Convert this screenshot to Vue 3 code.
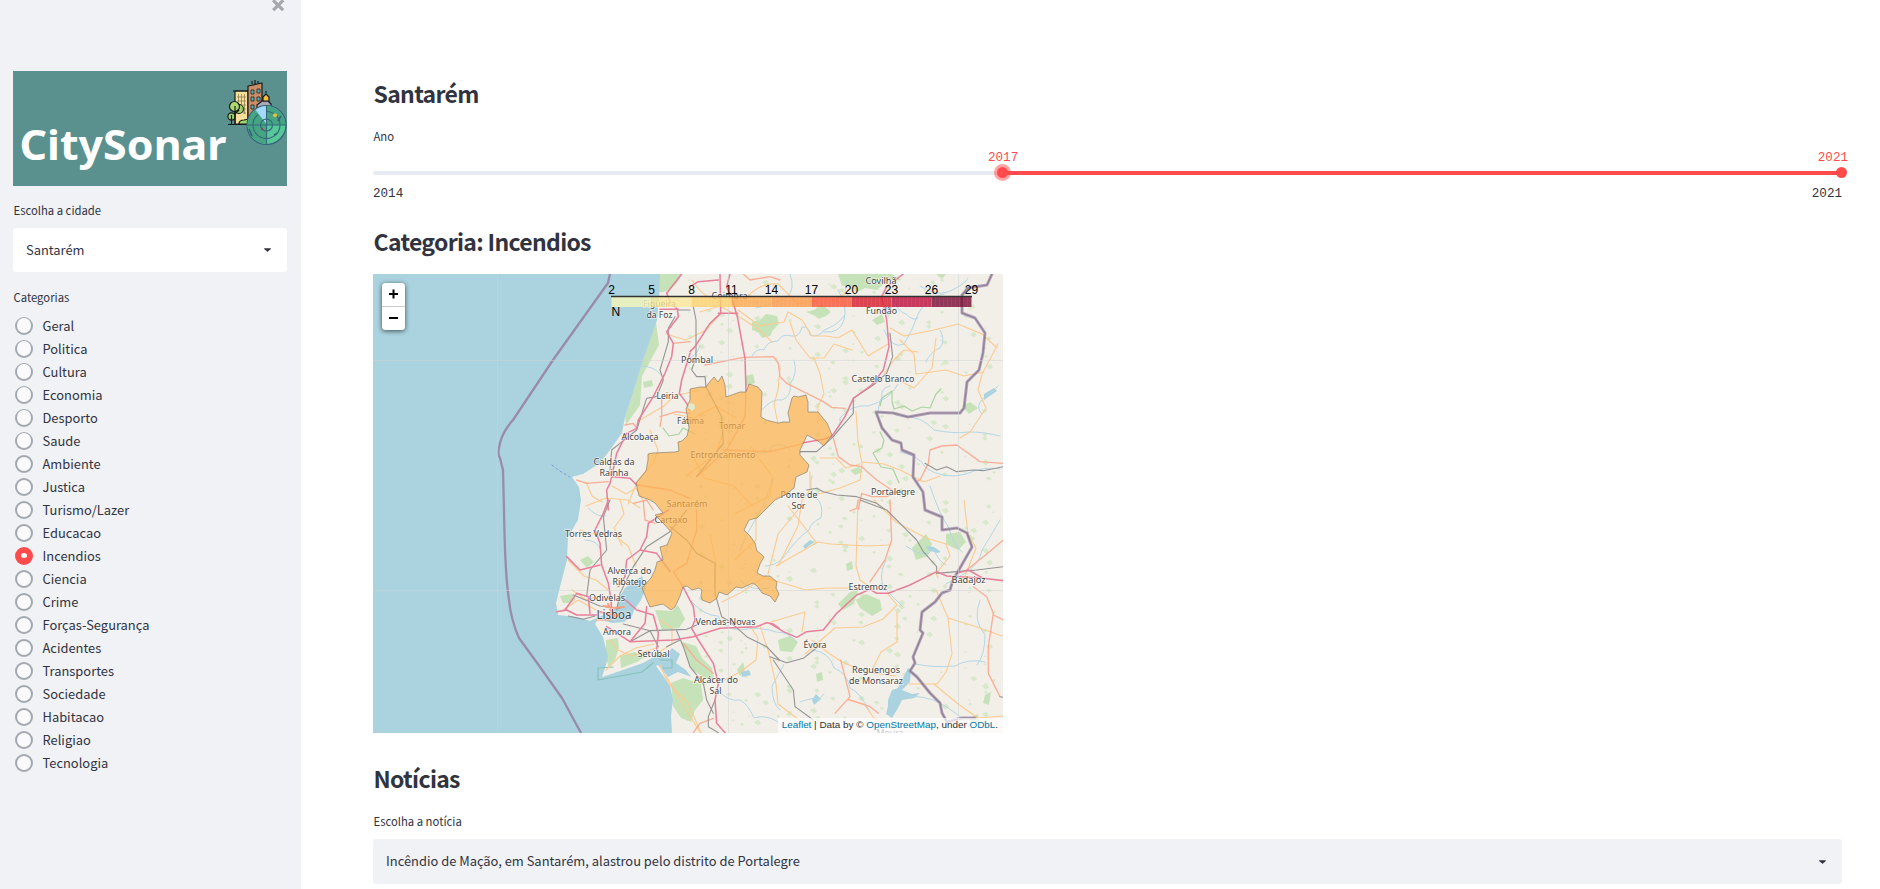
<script setup>
import { ref } from 'vue'

const categories = [
  'Geral', 'Politica', 'Cultura', 'Economia', 'Desporto', 'Saude', 'Ambiente', 'Justica',
  'Turismo/Lazer', 'Educacao', 'Incendios', 'Ciencia', 'Crime', 'Forças-Segurança',
  'Acidentes', 'Transportes', 'Sociedade', 'Habitacao', 'Religiao', 'Tecnologia',
]
const selected = ref('Incendios')

// Town labels: text, centre x, baseline y, width, font size
const towns = [
  ['Figueira', 659.5, 307, 33, 9], ['da Foz', 659.5, 318, 26, 9], ['Coimbra', 729.5, 299, 36, 9],
  ['Covilhã', 881, 284, 31, 9], ['Fundão', 881.5, 314, 31, 9], ['Pombal', 697, 362.5, 32, 9],
  ['Castelo Branco', 883, 381.5, 63, 9], ['Leiria', 667.5, 399, 22, 9], ['Fátima', 690.5, 424, 27, 9],
  ['Tomar', 732, 429, 26, 9], ['Alcobaça', 640, 440, 37, 9], ['Entroncamento', 723, 458, 65, 9],
  ['Caldas da', 614, 465, 41, 9], ['Rainha', 614, 476, 29, 9], ['Ponte de', 799, 498, 37, 9],
  ['Sor', 798.5, 509, 14, 9], ['Portalegre', 893, 495, 44, 9], ['Santarém', 687, 507, 41, 9],
  ['Cartaxo', 671, 522.5, 33, 9], ['Torres Vedras', 593.5, 537, 57, 9], ['Alverca do', 629.5, 574, 44, 9],
  ['Ribatejo', 629.5, 584.5, 34, 9], ['Odivelas', 607, 601, 36, 9], ['Lisboa', 614, 619, 35, 12],
  ['Amora', 617, 634.5, 28, 9], ['Setúbal', 653.5, 657, 32, 9], ['Vendas-Novas', 725.5, 625, 60, 9],
  ['Estremoz', 868, 589.5, 39, 9], ['Badajoz', 968.5, 583, 34, 9], ['Évora', 815, 648, 23, 9],
  ['Reguengos', 876, 672.5, 48, 9], ['de Monsaraz', 876, 683.5, 54, 9], ['Alcácer do', 716, 683, 44, 9],
  ['Sal', 715.5, 694, 12, 9], ['Moura', 890, 736, 27, 9],
]

const scale = [
  ['#f6f6b8', 2], ['#fbe99a', 5], ['#fdd36e', 8], ['#fea84f', 11], ['#fd9a48', 14],
  ['#fb5538', 17], ['#d91a2c', 20], ['#c00d3d', 23], ['#7a0a33', 26],
].map(([color, value], i) => ({ color, value, x: 611.5 + i * 40 }))
const ticks = [...scale.map((s) => ({ value: s.value, x: s.x })), { value: 29, x: 971.5 }]
const stripes = Array.from({ length: 90 }, (_, i) => 611.5 + i * 4)

const woods = [
  'M660 274L682 274Q673 294 657 292Z', 'M656 322L659 345L642 376L640 405L626 425L625 417L634 390L641 367Z',
  'M752 322l8-2 6-6 11 2 2 8-6 6-3 6-8 2-4-6-6-2z', 'M806 312l8-2 8-6 9 8-5 4-7 3-4-3z', 'M838 274l54 0 10 6-16 2-9 8-12-2-8 4-7-6-8 0z',
  'M746 376l7-2 2 9-9 3z', 'M872 320l10-6 3 8-8 3z', 'M936 274l10 0-4 5z', 'M580 560l8-4 6 6-7 6z',
  'M560 596l12-2 4 5-5 4-8 0z', 'M606 640l12-2 1 10-4 12-6 8-3-9z', 'M620 656l14-4 12 4-9 6-16 6z',
  'M682 642l14 4 6 12 10 10 2 12-10-2-14-10z', 'M671 683l12-5 18 6 2 16-8 10-4 12-10-4-8-12z',
  'M655 610l17 1 6-6 7 14-6 9-17 2z', 'M856 600l10-6 14 6 2 10-10 6-12-8z', 'M838 604l12-12 8-2 -4 14-11 6z',
  'M778 640l12-4 8 6-6 10-12-1z', 'M912 548l8-8 6-6 6 10 -4 12-12 4z', 'M946 534l14-2 6 10-8 8-12-6z',
  'M962 406l8-4 8 6-9 6z', 'M850 470l9-3 4 5-8 3z', 'M737 670l6-8 2 8-5 6z', 'M816 674l6-2 1 8-6 2z',
  'M985 695l6-3 -2 13-6-2z', 'M970 718l8-4 1 8-8 2z', 'M643 382l9-2 1 6-9 2z', 'M846 564l6-3 1 8-6 2z',
]

// Scattered small patches of scrub over the land east of the coast
const scrub = Array.from({ length: 420 }, (_, i) => {
  const x = 688 + ((i * 97 + i * i * 3) % 308)
  const y = 280 + ((i * 61 + i * i * 7) % 448)
  const r = 0.8 + (i % 4) * 0.5
  return `M${x} ${y}l${r * 2} ${-r} ${r} ${r * 1.5} ${-r * 1.4} ${r}z`
})

const rivers = [
  'M752 356q4-8 12-6 3-9 14-9 4-8 14-5 8 1 10-9 7-1 8 8 9 3 14-5 14-5 20-14', 'M790 274q6 16-4 24-16 8-30 10',
  'M838 290q10 16 6 30-4 14-20 12', 'M884 330q8 20 20 14 8-12 14-30 10-18 26-20', 'M920 286q14 10 28 6 18-8 20-14',
  'M762 410q10-12 20-10 10-4 8-16 8-10 4-24', 'M830 436q12-4 10-18 12-14 28-12 22-6 30-22', 'M878 412q2-14 4-14-2-10 8-12',
  'M998 386q-12 12-14 12-10 8-2 16', 'M902 416q20 0 32 14 20 4 36 2 14 0 30 4', 'M900 452q20 4 26 16 18 12 40 6 18-8 34-5',
  'M774 478q-6 12-10 26l-10 18q-8 12-14 28', 'M812 476q-4 12 4 22 8 6 5 20-10 4-12 12-12 8-26 28-8 8-18 8',
  'M690 600q14 16 28 16 4 12 22 14 20-4 36 2 14 0 20 10', 'M718 690q10 12 22 10 8 4 14 18 12-4 24 4l10 10', 'M930 486q10 30 18 40 6 20 14 26',
  'M906 546q18 14 28 3 4 12 12 16', 'M1000 520q-14 24-18 30-2 14-18 24-8 4-18 10', 'M915 664q20 4 40 2 14-8 30-4', 'M904 696q22 0 34 6 18 10 28 20l10 12',
  'M812 650q18 2 22 18 14 6 16 20 10 4 20 24', 'M780 710q-8-6-8-24 8-14 12-22', 'M660 560q8-8 8-16', 'M640 366q14 0 20 8', 'M700 346q-4 12-16 14',
  'M740 580q10 12 30 8', 'M886 560q-8 16-2 28 10 10 18 18', 'M800 702q16-6 18-2l6-6', 'M848 280q-6 10 2 18', 'M754 452q16 4 18-6 12-4 18 4',
  'M588 508q10 10 18 8', 'M585 540q12 0 16 10', 'M980 600q-8 20 5 35 0 20-8 30', 'M940 330q6 10 0 18-10 4-14 14', 'M894 300q4 12 12 14 8 8 12 4',
]

const minor = [
  'M692 280q14 22 30 20l26-4q14-14 30-12l20 20 18-4 20 0 18-14',
  'M738 310l22 16 24-4 4-10 14 8 10 16 14 0 12 2 14-8 16 26 20-12', 'M790 322l6 18 14 18 14 0 10-14 18 6', 'M814 358l6 16 4 20-6 12 0 18',
  'M700 312l20-6 18 10 22 14 12 12', 'M776 358l4 10-2 22 -4 14 4 20', 'M890 328l14 8 30-6 24-6 24 10 15 14', 'M900 340l14 14 2 20 30-4 18 6 20-4',
  'M936 338l-4 30-18 20-20-10', 'M884 374l10-14 10-10 14 2', 'M998 344l-16 30-4 16 8 18-16 24-10 6', 'M856 412l2 30 4 22-2 16-20 8-22 6',
  'M862 462l22 2 16 6 24 12 16-6', 'M820 458l16 0 10 10 14-4', 'M810 472l0 18-8 10-4 26-20 40', 'M798 510l-20 24-10 40',
  'M776 566l42-24 12 2 38 2 22-1', 'M858 500l-2 66 4 14 14 10', 'M816 542l-28-36', 'M874 500l22 22 30 16 20 6 4 12-14 18 2 4', 'M964 500l4 34 8 14-14 36',
  'M936 590l12 28 4 36-6 18-9 12-28 0', 'M948 618l26 8 28 10', 'M805 654l30-26 28-1 20-8 14-14-10-12', 'M897 612l0 30-16 10-8 16',
  'M802 632l3-20-34 10', 'M812 640l18 14 12 8 24 10 30 4', 'M848 700l16 4 10 14 24 14', 'M934 684l24 20 20 14 25-2', 'M766 576l-24 16 -20 10',
  'M766 578l40 12 20-2 30 0', 'M746 620l12 18-2 22-16 12-16 8', 'M760 626l8 24 8 34 2 20 24 18', 'M660 665l8 18 20 20 13 30', 'M666 676l20 34 14 22',
  'M586 506l20-8 22 2 12 8', 'M580 530l10 4 20-2 18 14 8 20', 'M568 560l16 16 12 4 12 10', 'M572 590l14 10 14-4', 'M560 612l18-12 18 10 20 6',
  'M610 640l8 10 14 6 24-8', 'M606 670l14-14 16-8 18-4', 'M660 620l12 8 0 16-16 10', 'M650 430l8 20-4 12-16 18-10 24', 'M640 420l24-14 10-10 26-6',
  'M666 334l20 6 20-10 16-18', 'M674 414l20 4 22-12 20 12', 'M694 458l10 20 30 8 18 20', 'M750 446l22 30-2 20-36 18', 'M620 500l4 14 -10 14 8 18',
  'M734 560l22-20 0-24', 'M710 534l6 30-2 24', 'M724 430l-8 24-30 22', 'M612 486l14 8 10-6 8 14', 'M586 482l6 14 10 6',
]

// Road network per survey sheet; each sheet has its own origin and 1:3 units
const sheets = [
  {
    at: 'translate(370 270) scale(.33333)',
    motorway: 'M935 12L890 70 900 95 922 118 925 140 890 185 910 220 905 260 885 310 865 350 850 380 805 450 800 475 770 490 740 550 725 620 720 640 710 660 715 720M960 250L935 330 928 370 950 400 960 420M870 118H925M800 645L780 625 725 620',
    trunk: 'M875 380V440L870 470M960 215L910 220M870 440L920 425 960 430M620 630L650 640 715 635M800 645L900 660 960 685M765 465L790 460 800 475M790 700L830 690 850 720',
    rail: 'M960 120L925 120M915 140L895 175 895 215 870 300 880 330 860 380 830 385 825 400 800 480M720 600L725 540 750 520 800 480',
  },
  {
    at: 'translate(690 270) scale(.33333)',
    motorway: 'M90 12L92 130L60 160 15 230 0 245M0 50L25 35 85 30M85 130H143M120 12L110 50 130 100 142 140 165 265 168 362M640 12L590 50 575 80 590 150 597 230 580 300 545 345 490 385 465 440 425 500L400 508 340 518',
    trunk: 'M45 285L160 262 250 260 265 280 270 320 290 340 400 395 425 412 465 415M430 505L445 560 480 585 515 590 560 630 605 660M940 580L870 575 800 525 755 528 720 540 715 580 690 630 680 635M100 540L240 545 340 520M168 365L165 440 110 540 20 620M630 660L590 680 545 680 515 670 505 718M160 12L180 30 240 20 270 30',
    rail: 'M10 110L18 150 18 260 5 300 20 320 45 320 48 350M600 190L608 260 590 310 550 345 490 385 490 430 455 470 430 500 380 545 330 545M350 660L380 655 400 665 440 675 500 680 560 700 585 718M705 580L740 600 770 590 800 605 850 600 880 602 940 590M48 350L95 440 100 520 20 620',
  },
  {
    at: 'translate(540 500) scale(.33333)',
    motorway: 'M205 0L190 40 165 90 180 130 185 195 205 250 213 300 215 330M80 170L120 210 180 195M385 30L325 70 320 110 300 150 260 180 255 230 235 260M245 290L290 330 340 345 355 400 350 450M300 150L350 160 390 215M430 262L460 320 465 360 455 385 475 420 520 490 535 550 525 600 530 670 555 698M320 320L315 370 270 425M200 380L270 425 400 420 460 410 540 385 650 380 680 368 700 372 718 385M50 335L80 330 110 345 170 345M75 330L110 280 145 290 150 340',
    trunk: 'M310 5L315 60 345 70M470 30V90L440 190 400 215 430 262M430 430L470 480 520 520M170 360L215 360M460 698L480 670 520 655',
    rail: 'M210 0L190 50 200 150 150 210 140 290M440 30L390 95 320 140 280 200 240 280 230 330M100 285L180 318 240 325M85 348L130 358 165 348M250 372L330 392 440 388 470 375M270 425L330 392M410 392L430 440 450 500 490 550 500 600 520 640M330 392L355 440M390 80L440 120 470 160 525 190 525 280 545 350 570 365 620 410 680 440 718 480M525 600L505 650 505 680 535 698M380 440L420 420',
  },
  {
    at: 'translate(770 500) scale(.33333)',
    motorway: 'M0 370L40 395 80 412 110 395 160 390 200 340 260 285 300 268 320 280 355 280 420 255 500 215 530 228 640 235 700 242M560 220L595 210 640 235',
    trunk: 'M360 0L365 120 345 180 300 245M265 0L260 25 240 33M700 120L640 170 590 210M610 260L650 290 670 340 655 440 655 520 690 590M212 480L230 550 240 590 195 640M235 598L300 620 325 640M670 345L700 360',
    rail: 'M270 0L350 30 400 80 440 120 460 155 500 200 500 220 560 215 620 210 700 200M0 470L50 488 100 475 150 435M10 480L70 570 75 620 130 660M690 590L700 592',
  },
]

const border = 'M992 274L987 285 968 288 962 295 962 313 975 318 985 333 983 353 979 370 967 382 964 408 960 413 930 413 908 417 893 413 876 412 882 428 892 440 901 443 902 450 914 455 913 477 917 483 923 492 925 510 942 517 942 530 957 528 967 533 972 547 960 568 953 580 950 590 942 593 935 602 922 612 920 630 923 633 913 657 915 663 910 671 917 677 930 693 940 703 942 713 947 722 962 718 975 718'
const sea = 'M373 274H660L659 300L657 320L641 367L634 390L625 417L622 433L610 450L600 463L583 474L572 477L579 487L581 500L578 520L568 537L567 560L560 587L556 603L558 615L577 617L590 621L606 614L616 608L620 596L625 588L642 576L646 588L641 600L634 610L632 616L624 622L612 623L598 619L595 624L603 637L608 657L605 668L602 677L617 672L643 663L652 658L662 652L664 658L672 648L680 654L676 663L686 670L691 677L678 672L668 677L658 665L656 666L664 677L670 686L673 700L671 716L672 733H373Z'
const district = 'M690 389L700 387 706 387 708 384 714 377 718 382 722 376 725 385 726 397 740 392 746 392 749 384 758 387 762 392 761 417 766 420 778 423 783 422 790 422 788 413 792 398 794 396 798 397 806 395 808 402 808 412 818 412 827 423 832 435 824 446 818 441 807 435 804 442 800 450 800 455 809 465 807 472 796 477 794 488 785 495 775 500 766 509 757 518 749 520 744 530 750 536 755 543 757 551 761 554 764 557 760 564 757 573 763 576 770 576 777 582 776 588 779 594 775 602 770 596 762 593 760 590 757 586 753 583 742 588 736 587 727 595 719 592 717 598 710 603 702 600 701 596 702 590 699 588 692 590 687 586 683 587 680 596 675 607 671 610 663 604 650 607 646 598 642 588 651 578 655 570 657 562 663 560 660 547 667 545 672 533 663 523 655 515 663 513 655 503 650 500 639 496 636 483 641 477 646 471 648 460 648 454 653 453 675 452 679 451 678 442 682 441 687 436 689 428 688 420 686 409 690 400Z'
</script>

<template>
  <div class="app">
    <aside class="sidebar">
      <svg class="close" viewBox="0 0 8 8" aria-label="Fechar"><path d="M1.4 0L0 1.4l.7.7L2.4 3.8.7 5.5 0 6.2l1.4 1.4.7-.7 1.7-1.7 1.7 1.7.7.7 1.4-1.4-.7-.7-1.7-1.7 1.7-1.7.7-.7L6.2 0l-.7.7-1.7 1.7L2.1.7z" /></svg>
      <svg class="logo" viewBox="13 71 274 115">
        <rect x="13" y="71" width="274" height="115" fill="#5a918f" />
        <text class="brand" x="19.5" y="160" textLength="207" lengthAdjust="spacingAndGlyphs">CitySonar</text>
        <g stroke="#171b1c" stroke-width="1.2" stroke-linejoin="round">
          <path d="M235 91h13v33h-13z" fill="#f9df99" />
          <path d="M248 86l14-3v41h-14z" fill="#c98e68" />
          <path d="M257 105l5-4h6l3 3v10h-14z" fill="#a9a9bc" />
          <path d="M263 101v-4l3-3 3 3v4z" fill="#f5bf3c" />
          <path d="M252 84v-3M255 84v-4M258 83v-2M266 93v-2M233 91h15M228 124.5h31" fill="none" />
          <path d="M239 124q0-4 5-4l5-1v5z" fill="#a0d667" />
          <circle cx="239" cy="109" r="4.5" fill="#9ed365" /><circle cx="234.500" cy="106.500" r="5" fill="#acd96d" />
          <circle cx="231.500" cy="116.500" r="3.600" fill="#9ed365" />
          <path d="M235 106v18M231.500 115v9M235 114l4-4" fill="none" />
        </g>
        <path d="M238.500 94v8M241.500 94v11M244.500 94v20M237 97h9M237 101h9M241 105h5M243 109h3M243 113h3" stroke="#8c7e58" stroke-width=".8" />
        <g fill="#4db5c4" stroke="#222" stroke-width=".8"><path d="M251 90h3v4h-3zM257 89h3v4h-3zM251 97h3v4h-3zM257 97h3v4h-3zM251 105h3v4h-3z" /></g>
        <circle cx="266.500" cy="125" r="19.500" fill="#56c796" stroke="#365f7d" stroke-width="1.200" />
        <path d="M266.500 125h19a19 19 0 0 0-19-19zM266.500 125h-19a19 19 0 0 1 19-19zM266.500 125h-19a19 19 0 0 0 19 19z" fill="#45a583" />
        <path d="M266.500 106v18l-11-14q5-4 11-4z" fill="#a5d9fb" />
        <g fill="none" stroke="#36677d" stroke-width="1.100"><path d="M280 125a13.500 13.500 0 1 1-22-10.500M266.500 111.500a13.500 13.500 0 0 1 13.500 13.500" /><circle cx="266.500" cy="125" r="6" /><path d="M247 125h39M266.500 106v38" /></g>
        <circle cx="275" cy="115.300" r="2" fill="#f0bd38" /><circle cx="262" cy="129" r="1.200" fill="#8b4461" /><path d="M249 129l3 7M274 135l3-2M278 121l3-5" stroke="#385a81" stroke-width="1.500" />
      </svg>
      <p class="label city-label">Escolha a cidade</p>
      <div class="select side-select"><span>Santarém</span><svg class="caret" viewBox="0 0 8 4"><path d="M.5 0h7q.8.500 0 1.200L4.500 3.800q-.5.400-1 0L.5 1.200Q-.3.500.5 0z" /></svg></div>
      <p class="label cat-label">Categorias</p>
      <div class="radios" role="radiogroup">
        <div v-for="c in categories" :key="c" class="radio" role="radio" :aria-checked="selected === c" @click="selected = c">
          <span class="dot" :class="{ on: selected === c }"><i /></span><span class="radio-text">{{ c }}</span>
        </div>
      </div>
    </aside>

    <main class="main">
      <h2 class="h-city">Santarém</h2>
      <p class="label year-label">Ano</p>
      <div class="slider">
        <div class="track"><div class="fill" /></div>
        <span class="thumb from" /><span class="thumb to" />
        <span class="val v-from">2017</span><span class="val v-to">2021</span>
      </div>
      <div class="range"><span>2014</span><span>2021</span></div>
      <h2 class="h-cat">Categoria: Incendios</h2>

      <div class="map">
        <svg class="tiles" viewBox="373 274 630 459">
          <rect x="373" y="274" width="630" height="459" fill="#f2efe9" />
          <g fill="#c6e2b8"><path v-for="(d, i) in woods" :key="i" :d="d" /></g>
          <g fill="#c8e5b8" opacity=".6"><path v-for="(d, i) in scrub" :key="i" :d="d" /></g>
          <path :d="sea" fill="#aad3df" />
          <g fill="#aad3df">
            <path d="M888 700l4-10 6-2 4-8 6-12 3 2-1 12-8 8 10 4 8-1-6 5-12 2-4 8-6 10-6-4 2-8z" /><path d="M926 546l8 1 7 5-4 1-9-3z" /><path d="M803 546l7-6 4 2-9 7z" /><path d="M812 700l4-6 5 5-7 6z" /><path d="M984 394l10-6 3 3-13 9z" /><path d="M741 672l8-2 2 5-9 2z" />
          </g>
          <g class="line" stroke="#b3d7e5" stroke-width="1"><path v-for="(d, i) in rivers" :key="i" :d="d" /></g>
          <g class="line" stroke="#a9d4a0" stroke-width="1.200">
            <path d="M880 406l2-8 10-7 0 10 2 8 10-3 8 5 10-4 8 1 6-14 5-5M880 432l4 8-2 8-9 5 8 14 12 2 6 14" />
            <path d="M663 428l6 8 10-2 4-6 12 6" />
            <path d="M613 667l-15 1 0 12 44-8 11-9M660 660l12 0 0 8-9 0" stroke="#86c2b8" />
          </g>
          <g class="line" stroke="#fbcb90" stroke-width="1.100"><path v-for="(d, i) in minor" :key="i" :d="d" /></g>
          <g v-for="s in sheets" :key="s.at" class="line" :transform="s.at">
            <path :d="s.trunk" stroke="#f9ae95" stroke-width="4" />
            <path :d="s.rail" stroke="#949494" stroke-width="3.300" />
            <path :d="s.motorway" stroke="#e8809b" stroke-width="4.600" />
          </g>
          <path d="M604 606l8 2 12-1M600 612l18 4M608 604l6 14" class="line" stroke="#fa9e80" stroke-width="2" />
          <path d="M610 274L608 283 553 360 513 420Q503 431 500 443T500 458L503 470 504 510Q505 575 509 600 511 620 519 638L540 667 562 698 581 733" class="line" stroke="#9a8aac" stroke-width="2.300" />
          <g class="line"><path :d="border" stroke="#a08aa8" stroke-width="3" opacity=".75" /><path :d="border" stroke="#85798c" stroke-width="1.200" opacity=".8" /></g>
          <path d="M552 465l6 5 12 7" class="line" stroke="#799bdb" stroke-dasharray="2 3" />
          <g stroke="#d0d3d3" stroke-opacity=".5"><path d="M497.500 274V733M728.500 274V733M958.500 274V733M373 360.500H1003M373 590.500H1003" /></g>
          <g class="town"><text v-for="t in towns" :key="t[0]" :x="t[1] - t[3] / 2" :y="t[2]" :textLength="t[3]" lengthAdjust="spacingAndGlyphs" :font-size="t[4]">{{ t[0] }}</text></g>
          <path :d="district" fill="#feb24c" fill-opacity=".7" stroke="#7a7362" stroke-opacity=".65" stroke-width=".9" />
          <path d="M689 403l5 1 1 4-3 3-4-3z" fill="#dcebd4" />
          <g opacity=".8"><rect v-for="s in scale" :key="s.value" :x="s.x" y="297" width="40" height="10" :fill="s.color" /></g>
          <g stroke="#fff" stroke-opacity=".06"><path v-for="x in stripes" :key="x" :d="`M${x} 297v10`" /></g>
          <path d="M611 296.500H972" stroke="#333" stroke-width="1.500" />
          <g class="tick"><text v-for="t in ticks" :key="t.value" :x="t.x" y="294" text-anchor="middle">{{ t.value }}</text><text x="611.500" y="316">N</text></g>
        </svg>
        <div class="zoom"><button aria-label="Aproximar"><i class="bar" /><i class="bar up" /></button><button aria-label="Afastar"><i class="bar" /></button></div>
        <div class="credit"><a>Leaflet</a> | Data by © <a>OpenStreetMap</a>, under <a>ODbL</a>.</div>
      </div>

      <h2 class="h-news">Notícias</h2>
      <p class="label news-label">Escolha a notícia</p>
      <div class="select news-select"><span>Incêndio de Mação, em Santarém, alastrou pelo distrito de Portalegre</span><svg class="caret" viewBox="0 0 8 4"><path d="M.5 0h7q.8.500 0 1.200L4.500 3.800q-.5.400-1 0L.5 1.200Q-.3.500.5 0z" /></svg></div>
    </main>
  </div>
</template>

<style>
body { margin: 0; overflow: hidden; background: #fff; }
</style>
<style scoped>
* { box-sizing: border-box; }
.app { display: flex; width: 1880px; height: 889px; overflow: hidden; color: #31333f; font-family: "Noto Sans CJK SC", "Noto Sans", sans-serif; font-size: 12.9px; }
.sidebar { width: 301px; height: 889px; padding: 0 14px 0 13px; background: #f0f2f6; display: flex; flex-direction: column; }
.close { align-self: flex-end; width: 13px; height: 13px; margin: -1px 2px 0 0; fill: #a6a8ae; flex: none; }
.logo { width: 274px; height: 115px; margin-top: 59px; flex: none; display: block; }
.brand { font: 700 42px "Noto Sans", sans-serif; fill: #fff; }
h2, p { margin: 0; }
.label { font-size: 11.3px; height: 20px; line-height: 20px; flex: none; padding-left: .5px; }
.city-label { margin-top: 14px; }
.select { display: flex; align-items: center; justify-content: space-between; height: 44px; border-radius: 3px; flex: none; }
.select span { line-height: 20px; padding-bottom: 1px; }
.side-select { margin-top: 8px; padding: 0 16px 0 13px; background: #fff; }
.caret { width: 7px; height: 4px; fill: #31333f; }
.cat-label { margin-top: 15px; }
.radios { margin-top: 7px; }
.radio { display: flex; align-items: center; height: 23.04px; padding-left: 2px; }
.dot { width: 18px; height: 18px; border-radius: 50%; background: #a3a8b0; display: grid; place-items: center; }
.dot i { width: 14.400px; height: 14.400px; border-radius: 50%; background: #fafafc; }
.dot.on { background: #ff4b4b; }
.dot.on i { width: 6px; height: 5px; }
.radio-text { margin-left: 9.500px; line-height: 20px; }
.main { width: 1469px; margin-left: 72px; padding-top: 73px; display: flex; flex-direction: column; }
h2 { font-size: 23px; line-height: 40px; height: 40px; font-weight: 600; letter-spacing: -.68px; padding-left: .5px; flex: none; }
.year-label { margin-top: 13px; }
.slider { position: relative; height: 36px; margin-top: 1px; padding-top: 24px; }
.track { height: 4px; border-radius: 2px; background: #e6eaf1; display: flex; justify-content: flex-end; overflow: hidden; }
.fill { width: 839.500px; background: #ff4b4b; }
.thumb { position: absolute; top: 20px; width: 11px; height: 11px; border-radius: 50%; background: #ff4b4b; }
.from { left: 624px; box-shadow: 0 0 0 3px rgba(255, 75, 75, .5); }
.to { right: -5px; }
.val { position: absolute; top: 3px; color: #ff4b4b; }
.v-from { left: 615px; }
.v-to { right: -6px; }
.val, .range { font-family: "Liberation Mono", monospace; font-size: 12.600px; line-height: 16px; }
.range { display: flex; justify-content: space-between; margin-top: 3px; height: 16px; }
.h-cat { margin-top: 19px; }
.map { position: relative; width: 630px; height: 459px; margin-top: 13px; overflow: hidden; flex: none; }
.tiles { display: block; width: 630px; height: 459px; }
.line { fill: none; stroke-linejoin: round; stroke-linecap: round; }
.town { font-family: "Noto Sans", sans-serif; fill: #444; stroke: rgba(255, 255, 255, .65); stroke-width: 1.500px; paint-order: stroke; }
.tick { font: 12px "Liberation Sans", Arial, sans-serif; fill: #000; }
.zoom { position: absolute; left: 9px; top: 9px; width: 23px; height: 47px; border-radius: 3.500px; background: #fff; box-shadow: 0 1px 5px rgba(0, 0, 0, .65); overflow: visible; }
.zoom button { display: grid; place-items: center; width: 23px; height: 23.500px; border: 0; border-bottom: 1px solid #ccc; background: transparent; padding: 0; }
.zoom button:last-child { border: 0; }
.bar { grid-area: 1 / 1; width: 9px; height: 2px; background: #000; }
.up { transform: rotate(90deg); }
.credit { position: absolute; right: 0; bottom: 0; height: 15px; padding: 0 5px 0 4px; background: rgba(255, 255, 255, .7); color: #333; font: 9.900px/14px "Liberation Sans", Arial, sans-serif; white-space: nowrap; }
.credit a { color: #0078a8; }
.h-news { margin-top: 25px; }
.news-label { margin-top: 13px; }
.news-select { height: 45px; margin-top: 8px; padding: 0 16px 0 13px; background: #f0f2f6; }
</style>
